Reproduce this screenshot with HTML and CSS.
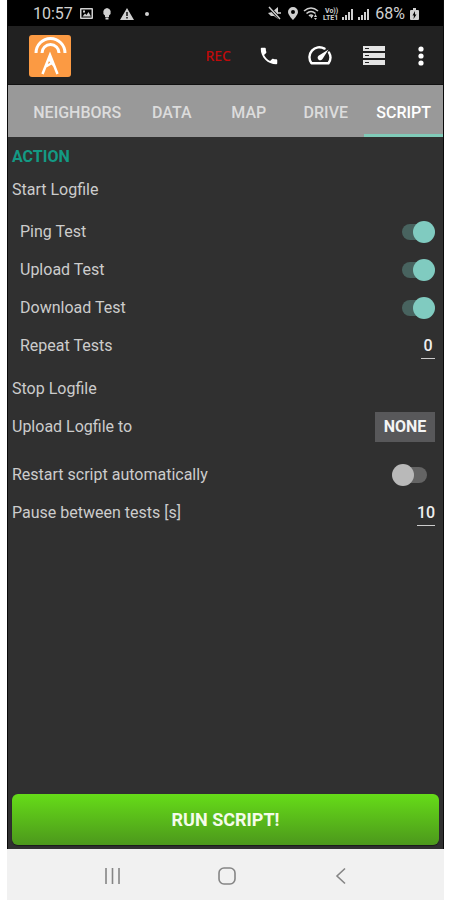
FILE: index.html
```html
<!DOCTYPE html>
<html lang="en">
<head>
<meta charset="utf-8">
<meta name="viewport" content="width=device-width, initial-scale=1">
<title>Script</title>
<link rel="stylesheet" href="styles.css">
</head>
<body>
<div class="phone">
  <div class="app">
    <div class="status">
      <span class="clock">10:57</span>
      <svg class="status-left" width="72" height="16" viewBox="0 0 72 16" fill="#d0d0d0" aria-hidden="true">
        <path fill-rule="evenodd" d="M1 2h11q1 0 1 1v9q0 1-1 1H1q-1 0-1-1V3q0-1 1-1zM1.500 3.500v8h10v-8zM2.500 10.500l2.500-3 1.500 1.500 2-3 2.500 4.500zM3 4.500h2v2H3z"/>
        <path d="M27 2a4.200 4.200 0 0 1 2 7.600V11h-4V9.600A4.200 4.200 0 0 1 27 2zM25.500 11.500h3v2h-3z"/>
        <path fill-rule="evenodd" d="M47 2l7 12H40zM46.300 6v4h1.400V6zM46.300 11v1.500h1.400V11z"/>
        <circle cx="67" cy="8" r="2"/>
      </svg>
      <svg class="status-right" width="103" height="18" viewBox="0 0 103 18" fill="#d0d0d0" aria-hidden="true">
        <path d="M0 8l4-1 6-5v12l-4-3H3z"/>
        <path d="M1 2l11 12" stroke="#000" stroke-width="3"/>
        <path d="M1 2l11 12M10 8h3" stroke="#d0d0d0" stroke-width="1.500"/>
        <path fill-rule="evenodd" d="M25 2a5 5 0 0 1 5 5c0 3-5 8-5 8s-5-5-5-8a5 5 0 0 1 5-5zm0 3a2 2 0 1 0 0 4 2 2 0 0 0 0-4z"/>
        <path d="M36 6q7-6 14 0M38.500 8.500q4.500-4 9 0M41 11q2-2 4 0" fill="none" stroke="#d0d0d0" stroke-width="1.600"/>
        <path d="M42 11h3l-1.500 2.500zM46 12l1.500-3 1.500 3zM47.500 15l-1.500-2h3z"/>
        <text x="57" y="8" class="volte">Vo))</text>
        <text x="55" y="15" class="volte">LTE1</text>
        <path d="M74 12h2v3H74zM77 10h2v5H77zM80 7h2v8H80zM83 4h2v11H83zM90 12h2v3H90zM93 10h2v5H93zM96 7h2v8H96zM99 4h2v11H99z"/>
      </svg>
      <span class="charge">68%</span>
      <svg width="9" height="14" viewBox="0 0 9 14" aria-hidden="true"><path fill="#d0d0d0" fill-rule="evenodd" d="M3 1h3v2h2q1 0 1 1v8q0 1-1 1H1q-1 0-1-1V4q0-1 1-1h2zM5 4L2.500 8.500H4L3.500 12l3-4.500H5z"/></svg>
    </div>
    <header class="appbar">
      <svg class="logo" width="42" height="42" viewBox="0 0 42 42" role="img" aria-label="App logo">
        <rect width="42" height="42" rx="3" fill="#fb9a43"/>
        <g fill="none" stroke="#fff" stroke-width="3">
          <path d="M7 18A14.500 14.500 0 0 1 36 18"/>
          <path d="M13 18A8.500 8.500 0 0 1 30 18"/>
          <path d="M13.500 39L21 20l7.500 19M16 32l7-4M20 24l6 8" stroke-width="2.500"/>
        </g>
      </svg>
      <button class="rec">REC</button>
      <button class="icon" aria-label="Call"><svg width="22" height="22" viewBox="0 0 24 24"><path fill="#fff" d="M6.600 10.800c1.400 2.800 3.800 5.100 6.600 6.600l2.200-2.200c.3-.3.700-.4 1-.2 1.100.4 2.300.6 3.600.6.600 0 1 .4 1 1V20c0 .6-.4 1-1 1C10.600 21 3 13.400 3 4c0-.6.400-1 1-1h3.500c.6 0 1 .4 1 1 0 1.200.2 2.400.6 3.600.1.300 0 .7-.2 1z"/></svg></button>
      <button class="icon gauge" aria-label="Speed"><svg width="26" height="22" viewBox="0 0 26 22"><path fill="none" stroke="#fff" stroke-width="2.400" stroke-linecap="round" stroke-linejoin="round" d="M17.500 3.600A10 10 0 0 0 4.500 18.300h17A10 10 0 0 0 22 7.500"/><path fill="#fff" d="M21.500 4.500l-6 9.500a2.600 2.600 0 1 1-4-3.200z"/></svg></button>
      <button class="icon storage" aria-label="Storage"><svg width="24" height="22" viewBox="0 0 24 22"><path fill="#e4e4e4" d="M1 1h22v5H1zM1 8h22v5H1zM1 15h22v5H1z"/><path fill="#222" d="M3 3h4v1H3zM3 10h4v1H3zM3 17h4v1H3z"/></svg></button>
      <button class="icon more" aria-label="More options"><svg width="8" height="22" viewBox="0 0 8 22" fill="#fff"><circle cx="4" cy="4" r="2.600"/><circle cx="4" cy="11" r="2.600"/><circle cx="4" cy="18" r="2.600"/></svg></button>
    </header>
    <nav class="tabs">
      <a href="#neighbors">NEIGHBORS</a>
      <a href="#data">DATA</a>
      <a href="#map">MAP</a>
      <a href="#drive">DRIVE</a>
      <a href="#script" class="active" aria-current="page">SCRIPT</a>
    </nav>
    <main class="content">
      <h1>ACTION</h1>
      <div class="row start">Start Logfile</div>
      <div class="group">
        <div class="row"><label for="ping">Ping Test</label><input class="switch" type="checkbox" id="ping" checked></div>
        <div class="row"><label for="up">Upload Test</label><input class="switch" type="checkbox" id="up" checked></div>
        <div class="row"><label for="down">Download Test</label><input class="switch" type="checkbox" id="down" checked></div>
        <div class="row"><label for="repeat">Repeat Tests</label><input class="number short" type="text" inputmode="numeric" id="repeat" value="0"></div>
      </div>
      <div class="row">Stop Logfile</div>
      <div class="row"><span id="target">Upload Logfile to</span><button class="none" aria-describedby="target">NONE</button></div>
      <div class="row restart"><label for="restart">Restart script automatically</label><input class="switch" type="checkbox" id="restart"></div>
      <div class="row"><label for="pause">Pause between tests [s]</label><input class="number" type="text" inputmode="numeric" id="pause" value="10"></div>
      <button class="run">RUN SCRIPT!</button>
    </main>
  </div>
  <div class="sysnav">
    <button aria-label="Recent apps"><svg width="22" height="22" viewBox="0 0 22 22"><path d="M4 3v16M10.500 3v16M17 3v16"/></svg></button>
    <button aria-label="Home"><svg width="22" height="22" viewBox="0 0 22 22"><rect x="3" y="3" width="16" height="16" rx="5"/></svg></button>
    <button aria-label="Back"><svg width="22" height="22" viewBox="0 0 22 22"><path d="M15 3.500L7 11l8 7.500"/></svg></button>
  </div>
</div>
</body>
</html>
```
FILE: styles.css
```css
* { box-sizing: border-box; }
body {
  margin: 0;
  padding: 0 6px 0 7px;
  background: #fff;
  font: 16px/20px Roboto, "Liberation Sans", sans-serif;
  color: #ccc;
}
button { border: 0; padding: 0; background: none; font: inherit; color: inherit; }
svg { display: block; flex: none; }
.phone { display: flex; flex-direction: column; min-height: 100vh; }
.app {
  flex: 1;
  display: flex;
  flex-direction: column;
  background: #303030;
  border: solid #0a0a0a;
  border-width: 0 1px;
}
.status {
  display: flex;
  align-items: center;
  height: 26px;
  padding: 2px 24px 0 25px;
  background: #000;
  color: #d0d0d0;
}
.status-left { margin-left: 7px; }
.status-right { margin-left: auto; }
.volte { font: bold 7px Roboto, sans-serif; }
.charge { margin: 0 5px 0 4px; }
.appbar {
  display: flex;
  align-items: center;
  height: 59px;
  padding: 2px 18px 0 21px;
  background: #212121;
  border-bottom: 1px solid #111;
}
.rec {
  margin-left: auto;
  color: #c00a0a;
  font: 500 14px/20px "Noto Sans", sans-serif;
}
.icon { margin-left: 27px; }
.storage { margin-left: 29px; }
.more { margin-left: 31px; }
.tabs {
  display: flex;
  justify-content: flex-end;
  height: 52px;
  background: #999;
}
.tabs a {
  display: flex;
  align-items: center;
  justify-content: center;
  min-width: 77px;
  padding: 6px 12px 0;
  border-bottom: 3px solid transparent;
  color: #dcdcdc;
  font-weight: 500;
  text-decoration: none;
}
.tabs .active { color: #fff; border-color: #80cbb8; }
.content {
  flex: 1;
  display: flex;
  flex-direction: column;
  padding: 2px 4px 4px;
}
h1 {
  margin: 0;
  font-size: 16px;
  line-height: 36px;
  font-weight: 700;
  color: #139a84;
}
.row {
  display: flex;
  align-items: center;
  justify-content: space-between;
  height: 38px;
  padding-right: 4px;
}
.start { height: 30px; }
.group { padding: 8px 0 5px 8px; }
.restart { margin-top: 10px; }
.switch {
  appearance: none;
  position: relative;
  width: 43px;
  height: 22px;
  margin: 0;
}
.switch::before {
  content: "";
  position: absolute;
  inset: 3px 8px 3px 10px;
  border-radius: 8px;
  background: #646464;
}
.switch::after {
  content: "";
  position: absolute;
  top: 0;
  left: 0;
  width: 22px;
  height: 22px;
  border-radius: 50%;
  background: #b9b9b9;
}
.switch:checked::before { background: #48635f; }
.switch:checked::after { left: auto; right: 0; background: #80cbc0; }
.number {
  width: 18px;
  height: 26px;
  padding: 0;
  border: 0;
  border-bottom: 1px solid #ccc;
  background: none;
  color: #eee;
  font: 500 16px/24px Roboto, sans-serif;
  text-align: center;
}
.short { width: 14px; }
.none {
  width: 60px;
  height: 30px;
  background: #58585a;
  color: #f4f4f4;
  font-weight: 700;
}
.run {
  height: 51px;
  margin-top: auto;
  border-radius: 6px;
  background: linear-gradient(#66dc18, #4c981c);
  box-shadow: 0 1px 1px #1b1b1b;
  color: #f4fbea;
  font-size: 18px;
  font-weight: 700;
}
.sysnav {
  display: flex;
  align-items: center;
  justify-content: center;
  gap: 92px;
  height: 51px;
  padding: 2px 0 0 3px;
  background: #f1f1f1;
}
.sysnav svg { fill: none; stroke: #858585; stroke-width: 1.6; }
```
